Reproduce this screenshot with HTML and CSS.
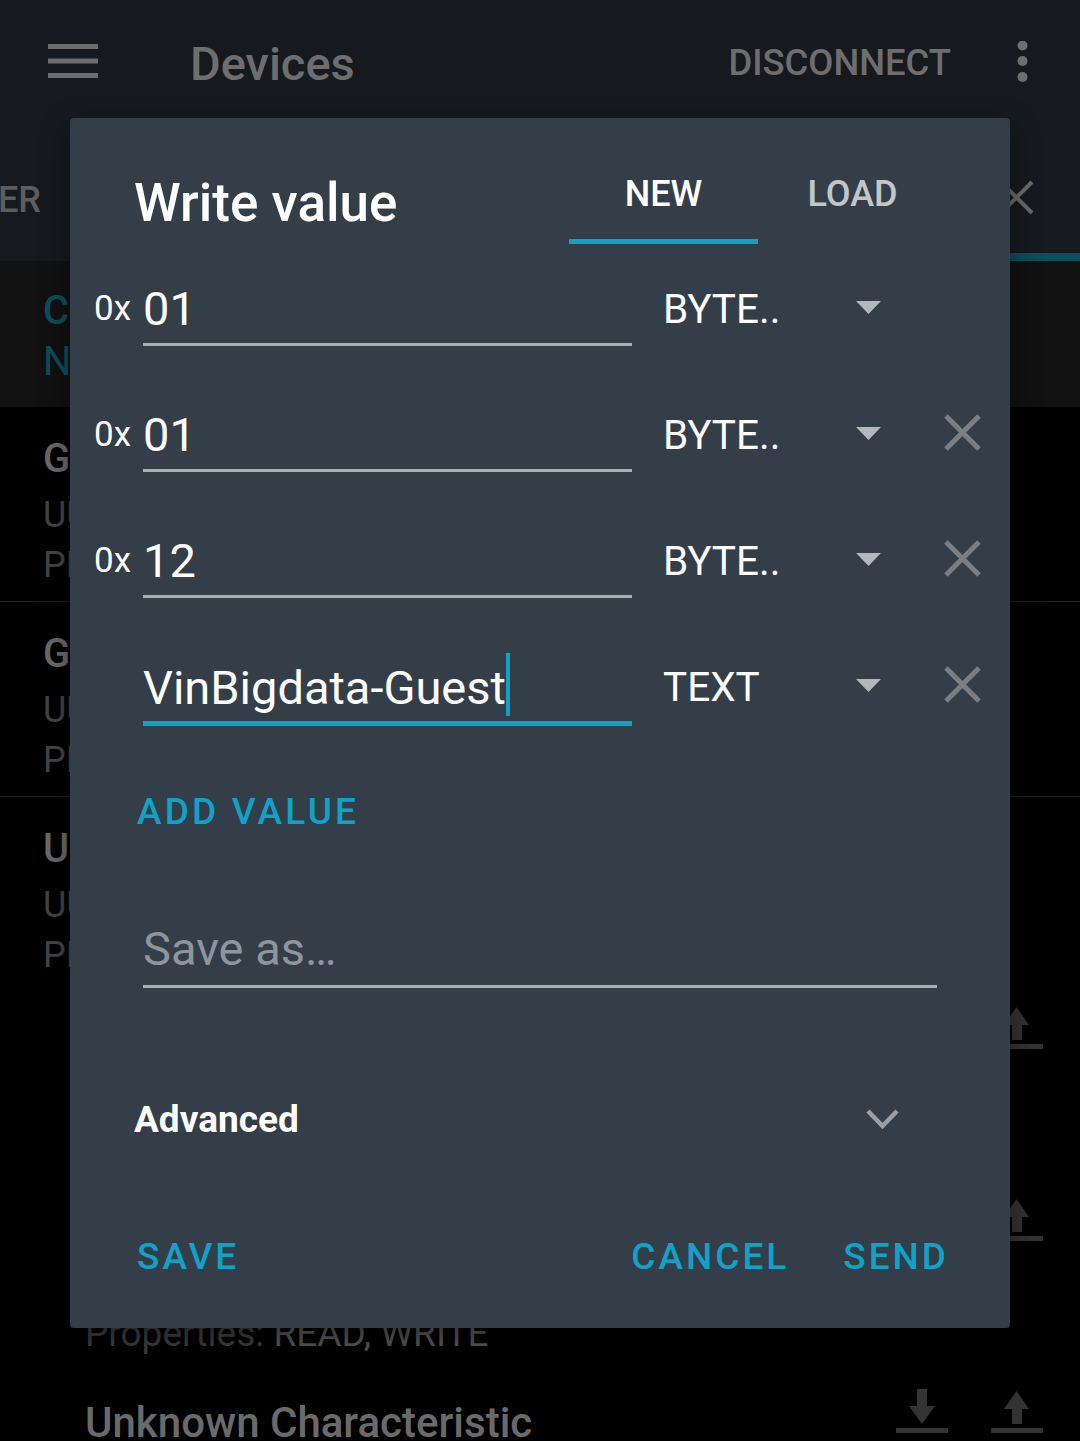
FILE: index.html
```html
<!DOCTYPE html>
<html lang="en">
<head>
<meta charset="utf-8">
<title>Devices - Write value</title>
<link rel="stylesheet" href="styles.css">
</head>
<body>
<div class="screen">
  <header class="appbar">
    <svg class="menu" width="50" height="34" viewBox="0 0 50 34"><rect x="0" y="0" width="50" height="5"/><rect x="0" y="14.5" width="50" height="5"/><rect x="0" y="29" width="50" height="5"/></svg>
    <div class="app-title">Devices</div>
    <div class="app-action">DISCONNECT</div>
    <svg class="kebab" width="11" height="42" viewBox="0 0 11 42"><circle cx="5.5" cy="4.5" r="5"/><circle cx="5.5" cy="20" r="5"/><circle cx="5.5" cy="36" r="5"/></svg>
  </header>

  <div class="tabstrip">
    <div class="tabstrip-row">
      <span class="tab-label">ER</span>
      <svg class="tab-close" width="35" height="35" viewBox="0 0 35 35"><path d="M2 2L33 33M33 2L2 33"/></svg>
    </div>
    <div class="tab-track"><div class="tab-indicator"></div></div>
  </div>

  <div class="status">
    <div class="status-text">
      <div class="status-main">CONNECTED</div>
      <div class="status-sub">NOT BONDED</div>
    </div>
    <svg class="status-more" width="12" height="44" viewBox="0 0 12 44"><circle cx="6" cy="6" r="6"/><circle cx="6" cy="22" r="6"/><circle cx="6" cy="38" r="6"/></svg>
  </div>

  <div class="services">
    <div class="service">
      <div class="service-name">Generic Access</div>
      <div class="service-line">UUID: 0x1800</div>
      <div class="service-line">PRIMARY SERVICE</div>
    </div>
    <div class="service">
      <div class="service-name">Generic Attribute</div>
      <div class="service-line">UUID: 0x1801</div>
      <div class="service-line">PRIMARY SERVICE</div>
    </div>
    <div class="service service-open">
      <div class="service-name">Unknown Service</div>
      <div class="service-line">UUID: 0000ffe0-0000-1000-8000-00805f9b34fb</div>
      <div class="service-line">PRIMARY SERVICE</div>
    </div>

    <div class="char">
      <div class="char-text">
        <div class="char-name">Unknown Characteristic</div>
        <div class="char-line"><span class="char-key">UUID: </span><span class="char-val">0000ffe1-0000-1000-8000-00805f9b34fb</span></div>
        <div class="char-line"><span class="char-key">Properties: </span><span class="char-val">READ, WRITE</span></div>
      </div>
      <div class="char-icons">
        <svg class="io" width="52" height="44" viewBox="0 0 52 44"><rect x="21" y="0" width="10" height="18"/><polygon points="13,17 39,17 26,35"/><rect x="0" y="39" width="52" height="5"/></svg>
        <svg class="io" width="52" height="44" viewBox="0 0 52 44"><polygon points="25.5,2 38,20 13,20"/><rect x="21" y="19" width="10" height="16"/><rect x="0" y="39" width="52" height="5"/></svg>
      </div>
    </div>
    <div class="char">
      <div class="char-text">
        <div class="char-name">Unknown Characteristic</div>
        <div class="char-line"><span class="char-key">UUID: </span><span class="char-val">0000ffe2-0000-1000-8000-00805f9b34fb</span></div>
        <div class="char-line"><span class="char-key">Properties: </span><span class="char-val">READ, WRITE</span></div>
      </div>
      <div class="char-icons">
        <svg class="io" width="52" height="44" viewBox="0 0 52 44"><rect x="21" y="0" width="10" height="18"/><polygon points="13,17 39,17 26,35"/><rect x="0" y="39" width="52" height="5"/></svg>
        <svg class="io" width="52" height="44" viewBox="0 0 52 44"><polygon points="25.5,2 38,20 13,20"/><rect x="21" y="19" width="10" height="16"/><rect x="0" y="39" width="52" height="5"/></svg>
      </div>
    </div>
    <div class="char">
      <div class="char-text">
        <div class="char-name">Unknown Characteristic</div>
        <div class="char-line"><span class="char-key">UUID: </span><span class="char-val">0000ffe3-0000-1000-8000-00805f9b34fb</span></div>
        <div class="char-line"><span class="char-key">Properties: </span><span class="char-val">READ, WRITE</span></div>
      </div>
      <div class="char-icons">
        <svg class="io" width="52" height="44" viewBox="0 0 52 44"><rect x="21" y="0" width="10" height="18"/><polygon points="13,17 39,17 26,35"/><rect x="0" y="39" width="52" height="5"/></svg>
        <svg class="io" width="52" height="44" viewBox="0 0 52 44"><polygon points="25.5,2 38,20 13,20"/><rect x="21" y="19" width="10" height="16"/><rect x="0" y="39" width="52" height="5"/></svg>
      </div>
    </div>
  </div>
</div>

<div class="dialog">
  <div class="dlg-head">
    <div class="dlg-title">Write value</div>
    <div class="dlg-tabs">
      <div class="dlg-tab active">NEW</div>
      <div class="dlg-tab">LOAD</div>
    </div>
  </div>

  <div class="vrow">
    <div class="prefix">0x</div>
    <div class="field">01</div>
    <div class="vtype">BYTE..</div>
    <svg class="caret" width="25" height="13" viewBox="0 0 25 13"><polygon points="0,0 25,0 12.5,13"/></svg>
  </div>
  <div class="vrow">
    <div class="prefix">0x</div>
    <div class="field">01</div>
    <div class="vtype">BYTE..</div>
    <svg class="caret" width="25" height="13" viewBox="0 0 25 13"><polygon points="0,0 25,0 12.5,13"/></svg>
    <svg class="remove" width="37" height="37" viewBox="0 0 37 37"><path d="M2 2L35 35M35 2L2 35"/></svg>
  </div>
  <div class="vrow">
    <div class="prefix">0x</div>
    <div class="field">12</div>
    <div class="vtype">BYTE..</div>
    <svg class="caret" width="25" height="13" viewBox="0 0 25 13"><polygon points="0,0 25,0 12.5,13"/></svg>
    <svg class="remove" width="37" height="37" viewBox="0 0 37 37"><path d="M2 2L35 35M35 2L2 35"/></svg>
  </div>
  <div class="vrow">
    <div class="prefix"></div>
    <div class="field focused">VinBigdata-Guest<span class="cursor"></span></div>
    <div class="vtype">TEXT</div>
    <svg class="caret" width="25" height="13" viewBox="0 0 25 13"><polygon points="0,0 25,0 12.5,13"/></svg>
    <svg class="remove" width="37" height="37" viewBox="0 0 37 37"><path d="M2 2L35 35M35 2L2 35"/></svg>
  </div>

  <div class="add-value">ADD VALUE</div>

  <div class="save-as">Save as…</div>

  <div class="advanced">
    <span class="adv-label">Advanced</span>
    <svg class="chevron" width="33" height="20" viewBox="0 0 33 20"><polyline points="2,2 16.5,17 31,2"/></svg>
  </div>

  <div class="dlg-actions">
    <span class="btn">SAVE</span>
    <span class="btn btn-cancel">CANCEL</span>
    <span class="btn btn-send">SEND</span>
  </div>
</div>
</body>
</html>
```

FILE: styles.css
```css
html, body {
  margin: 0;
  padding: 0;
}
body {
  width: 1080px;
  height: 1441px;
  overflow: hidden;
  position: relative;
  background: #000;
  font-family: Roboto, "Liberation Sans", sans-serif;
}

.screen {
  width: 1080px;
}

/* App bar */
.appbar {
  display: flex;
  align-items: flex-start;
  height: 126px;
  background: #161a1e;
}
.menu {
  margin-left: 48px;
  margin-top: 44px;
  fill: #6c6c6c;
}
.app-title {
  margin-left: 92px;
  padding-top: 37px;
  font-size: 47px;
  line-height: 54px;
  font-weight: 500;
  color: #6e6e6e;
}
.app-action {
  margin-left: auto;
  padding-top: 41px;
  font-size: 36.4px;
  line-height: 44px;
  font-weight: 500;
  color: #6e6e6e;
}
.kebab {
  margin-left: 66px;
  margin-top: 41px;
  margin-right: 52px;
  fill: #6e6e6e;
}

/* Tab strip */
.tabstrip {
  height: 135px;
  background: #161a1e;
}
.tabstrip-row {
  display: flex;
  justify-content: space-between;
  align-items: flex-start;
  height: 127px;
}
.tab-label {
  padding-top: 52px;
  font-size: 36px;
  line-height: 44px;
  font-weight: 500;
  color: #5d5d5d;
  margin-left: -2px;
}
.tab-close {
  margin-top: 54px;
  margin-right: 46px;
  stroke: #6a6a6a;
  stroke-width: 4;
  fill: none;
}
.tab-track {
  height: 8px;
}
.tab-indicator {
  margin-left: 900px;
  height: 8px;
  background: #0b4e5c;
}

/* Status band */
.status {
  display: flex;
  justify-content: space-between;
  height: 146px;
  background: #111111;
}
.status-text {
  padding-left: 43px;
  padding-top: 24px;
  color: #0c4f5e;
  font-size: 40px;
  line-height: 51px;
}
.status-main {
  font-weight: 500;
}
.status-more {
  margin-top: 46px;
  margin-right: 70px;
  fill: #2a2a2a;
}

/* Services */
.service {
  padding-left: 43px;
  padding-top: 26px;
  padding-bottom: 11px;
  border-bottom: 1px solid #1c1c1c;
  white-space: nowrap;
}
.service-open {
  padding-bottom: 9px;
  border-bottom: none;
}
.service-name {
  font-size: 40px;
  line-height: 52px;
  font-weight: 500;
  color: #6a6a6a;
}
.service-line {
  font-size: 36px;
  line-height: 50px;
  color: #444444;
}
.service-name + .service-line {
  margin-top: 5px;
}

.char {
  display: flex;
  justify-content: space-between;
  height: 192px;
  box-sizing: border-box;
  padding-left: 85px;
  white-space: nowrap;
}
.char-text {
  padding-top: 24px;
}
.char-name {
  font-size: 42px;
  line-height: 52px;
  font-weight: 500;
  color: #6a6a6a;
}
.char-line {
  font-size: 37px;
  line-height: 50px;
}
.char-name + .char-line {
  margin-top: 2px;
}
.char-key {
  color: #3e3e3e;
}
.char-val {
  color: #575757;
}
.char-icons {
  display: flex;
  gap: 43px;
  margin-top: 16px;
  margin-right: 37px;
  align-self: flex-start;
}
.io {
  fill: #333333;
}

/* Dialog */
.dialog {
  position: absolute;
  left: 70px;
  top: 118px;
  width: 940px;
  height: 1210px;
  background: #333e48;
  border-radius: 4px;
  box-shadow: 0 10px 30px rgba(0, 0, 0, 0.45);
  color: #ffffff;
}
.dlg-head {
  display: flex;
  align-items: flex-start;
  height: 126px;
}
.dlg-title {
  padding-left: 64px;
  padding-top: 55px;
  font-size: 53px;
  line-height: 60px;
  font-weight: 500;
  color: #ffffff;
}
.dlg-tabs {
  display: flex;
  margin-left: auto;
  margin-right: 63px;
}
.dlg-tab {
  width: 189px;
  box-sizing: border-box;
  height: 126px;
  padding-top: 54px;
  text-align: center;
  font-size: 36px;
  line-height: 44px;
  font-weight: 500;
  color: #c3c6c9;
}
.dlg-tab.active {
  color: #ffffff;
  border-bottom: 5px solid #0fa2c7;
}

.vrow {
  display: flex;
  align-items: flex-start;
  height: 126px;
}
.prefix {
  width: 49px;
  margin-left: 24px;
  padding-top: 45px;
  font-size: 35px;
  line-height: 40px;
  color: #ffffff;
}
.field {
  width: 489px;
  box-sizing: border-box;
  padding-top: 37px;
  padding-bottom: 6px;
  border-bottom: 3px solid #a9aeb3;
  font-size: 47px;
  line-height: 56px;
  color: #ffffff;
  white-space: nowrap;
}
.field.focused {
  padding-bottom: 5px;
  border-bottom: 5px solid #0fa2c7;
}
.cursor {
  display: inline-block;
  width: 4px;
  height: 63px;
  margin-top: -6px;
  vertical-align: -12px;
  background: #0fa2c7;
}
.vtype {
  width: 193px;
  box-sizing: border-box;
  margin-left: 31px;
  padding-top: 41px;
  font-size: 40.5px;
  line-height: 48px;
  color: #ffffff;
}
.caret {
  margin-top: 57px;
  fill: #b5b8bb;
}
.remove {
  margin-left: 63px;
  margin-top: 44px;
  stroke: #7b7f83;
  stroke-width: 5;
  fill: none;
}

.add-value {
  padding-left: 67px;
  margin-top: 42px;
  font-size: 37px;
  line-height: 44px;
  font-weight: 500;
  letter-spacing: 3.2px;
  color: #10a2c8;
}

.save-as {
  margin-left: 73px;
  width: 794px;
  box-sizing: border-box;
  margin-top: 87px;
  padding-bottom: 8px;
  border-bottom: 3px solid #a9aeb3;
  font-size: 47px;
  line-height: 56px;
  color: #8e959c;
}

.advanced {
  display: flex;
  align-items: flex-start;
  margin-top: 110px;
  padding-left: 64px;
  padding-right: 111px;
  height: 44px;
}
.adv-label {
  font-size: 37px;
  line-height: 44px;
  font-weight: 700;
  color: #ffffff;
}
.chevron {
  margin-left: auto;
  margin-top: 11px;
  stroke: #9a9fa3;
  stroke-width: 4.5;
  fill: none;
}

.dlg-actions {
  display: flex;
  margin-top: 93px;
  padding-left: 67px;
  padding-right: 61px;
}
.btn {
  font-size: 37px;
  line-height: 44px;
  font-weight: 500;
  letter-spacing: 3px;
  color: #10a2c8;
}
.btn-cancel {
  margin-left: auto;
}
.btn-send {
  margin-left: 54px;
}
```
